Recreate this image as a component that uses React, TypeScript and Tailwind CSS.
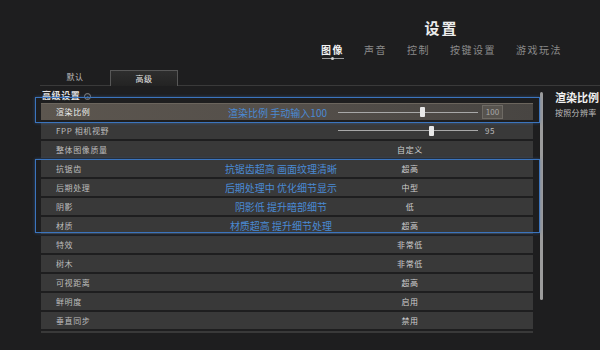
type Row = {
  label: string;
  value?: string;
  note?: string;
  slider?: string; // left part width class
  boxed?: boolean;
  active?: boolean;
};

const rows: Row[] = [
  { label: "渲染比例", slider: "w-[82px]", value: "100", boxed: true, note: "渲染比例 手动输入100", active: true },
  { label: "FPP 相机视野", slider: "w-[91px]", value: "95" },
  { label: "整体图像质量", value: "自定义" },
  { label: "抗锯齿", value: "超高", note: "抗锯齿超高 画面纹理清晰" },
  { label: "后期处理", value: "中型", note: "后期处理中 优化细节显示" },
  { label: "阴影", value: "低", note: "阴影低 提升暗部细节" },
  { label: "材质", value: "超高", note: "材质超高 提升细节处理" },
  { label: "特效", value: "非常低" },
  { label: "树木", value: "非常低" },
  { label: "可视距离", value: "超高" },
  { label: "鲜明度", value: "启用" },
  { label: "垂直同步", value: "禁用" },
  { label: "" },
];

const tabs = ["图像", "声音", "控制", "按键设置", "游戏玩法"];

const SettingRow = ({ row }: { row: Row }) => (
  <div
    className={`flex items-center h-[17px] mb-[2px] shrink-0 ${
      row.active
        ? "bg-gradient-to-r from-[#5c564f] via-[#544f4a] to-[#484542] border-t border-[#6b655d]"
        : "bg-[#393939]"
    }`}
  >
    {/* label */}
    <div
      className={`w-[125px] shrink-0 pl-[15px] text-[8px] tracking-[0.6px] whitespace-nowrap ${
        row.active ? "text-[#f0f0f0]" : "text-[#bdbdbd]"
      }`}
    >
      {row.label}
    </div>

    {row.slider ? (
      <>
        <div className="w-[172px] shrink-0 pr-[11px] text-right text-[10px] text-[#4a8ad4] whitespace-nowrap">
          {row.note}
        </div>
        <div className="flex items-center w-[140px] shrink-0">
          <div className={`${row.slider} h-px bg-[#a8a8a8]`} />
          <div className="w-[5px] h-[10px] bg-[#e8e8e8] rounded-[1px]" />
          <div className="flex-1 h-px bg-[#a8a8a8]" />
        </div>
        {row.boxed ? (
          <div className="ml-[4px] w-[21px] h-[14px] flex items-center justify-center bg-[#57534e] border border-[#6e6a64] text-[8px] text-[#a8a8a8]">
            {row.value}
          </div>
        ) : (
          <div className="ml-[7px] text-[8px] text-[#bdbdbd] tracking-[0.5px]">{row.value}</div>
        )}
      </>
    ) : (
      <>
        <div className="w-[204px] shrink-0 pl-[26px] text-center text-[10px] text-[#4a8ad4] whitespace-nowrap">
          {row.note}
        </div>
        <div className="w-[80px] shrink-0 text-center text-[8px] tracking-[0.6px] text-[#cfcfcf]">{row.value}</div>
      </>
    )}
  </div>
);

export default function App() {
  return (
    <div
      className="w-[600px] h-[350px] overflow-hidden bg-[#1e1e1f] text-white"
      style={{ fontFamily: '"Noto Sans CJK SC", "Noto Sans", sans-serif' }}
    >
      {/* header */}
      <div className="ml-[300px] w-[283px] pt-[19px] flex flex-col items-center">
        <h1 className="text-[15px] leading-[18px] font-bold tracking-[2px] text-[#ececec]">设置</h1>
        <div className="mt-[6px] flex gap-[20px]">
          {tabs.map((t, i) => (
            <div key={t} className="flex flex-col items-center">
              <span
                className={`text-[10px] leading-[14px] tracking-[1.5px] ${
                  i === 0 ? "text-[#f2f2f2] font-bold" : "text-[#8a8a8a]"
                }`}
              >
                {t}
              </span>
              {i === 0 && (
                <div className="relative w-[22px] h-px bg-[#9a9a9a] mt-[1px]">
                  <div className="absolute left-[9px] -top-[1px] w-[3px] h-[3px] rounded-full bg-[#cfcfcf]" />
                </div>
              )}
            </div>
          ))}
        </div>
      </div>

      {/* sub tabs */}
      <div className="ml-[40px] mt-[11px] flex items-end h-[16px] border-b border-[#3a3a3a]">
        <div className="w-[70px] text-center text-[8px] tracking-[0.6px] text-[#bdbdbd] pb-[2px]">默认</div>
        <div className="w-[68px] h-[16px] -mb-px flex items-center justify-center text-[8px] tracking-[0.6px] text-[#e6e6e6] bg-gradient-to-b from-[#2e2e2e] to-[#232323] border border-b-0 border-[#575757]">
          高级
        </div>
      </div>

      {/* main */}
      <div className="flex pl-[41px]">
        <div className="relative w-[492px] shrink-0 flex flex-col">
          <div className="mt-[5px] flex items-center gap-[4px] pl-[1px] h-[10px] text-[9px] font-bold tracking-[0.6px] text-[#e4e4e4]">
            高级设置
            <span className="w-[7px] h-[7px] rounded-full border border-[#888] text-[5px] leading-none flex items-center justify-center text-[#aaa] font-normal">
              i
            </span>
          </div>
          <div className="mt-[2px] h-[230px] overflow-hidden flex flex-col">
            {rows.map((r, i) => (
              <SettingRow key={i} row={r} />
            ))}
          </div>

          {/* annotation boxes */}
          <div className="absolute left-[-6px] top-[11px] w-[505px] h-[26px] border border-[#3b74bd] shadow-[0_0_3px_rgba(59,116,189,0.5)]" />
          <div className="absolute left-[-6px] top-[73px] w-[505px] h-[74px] border border-[#3b74bd] shadow-[0_0_3px_rgba(59,116,189,0.5)]" />
        </div>

        {/* scrollbar */}
        <div className="ml-[7px] mt-[6px] w-[3px] shrink-0 h-[208px] bg-[#9c9c9c] rounded-full" />

        {/* right panel */}
        <div className="ml-[12px] min-w-0 flex-1 overflow-hidden flex flex-col whitespace-nowrap">
          <div className="mt-[4px] text-[11px] leading-[14px] font-bold text-[#f0f0f0]">渲染比例</div>
          <div className="mt-[4px] text-[8px] leading-[10px] tracking-[0.3px] text-[#bdbdbd]">按照分辨率</div>
        </div>
      </div>
    </div>
  );
}
